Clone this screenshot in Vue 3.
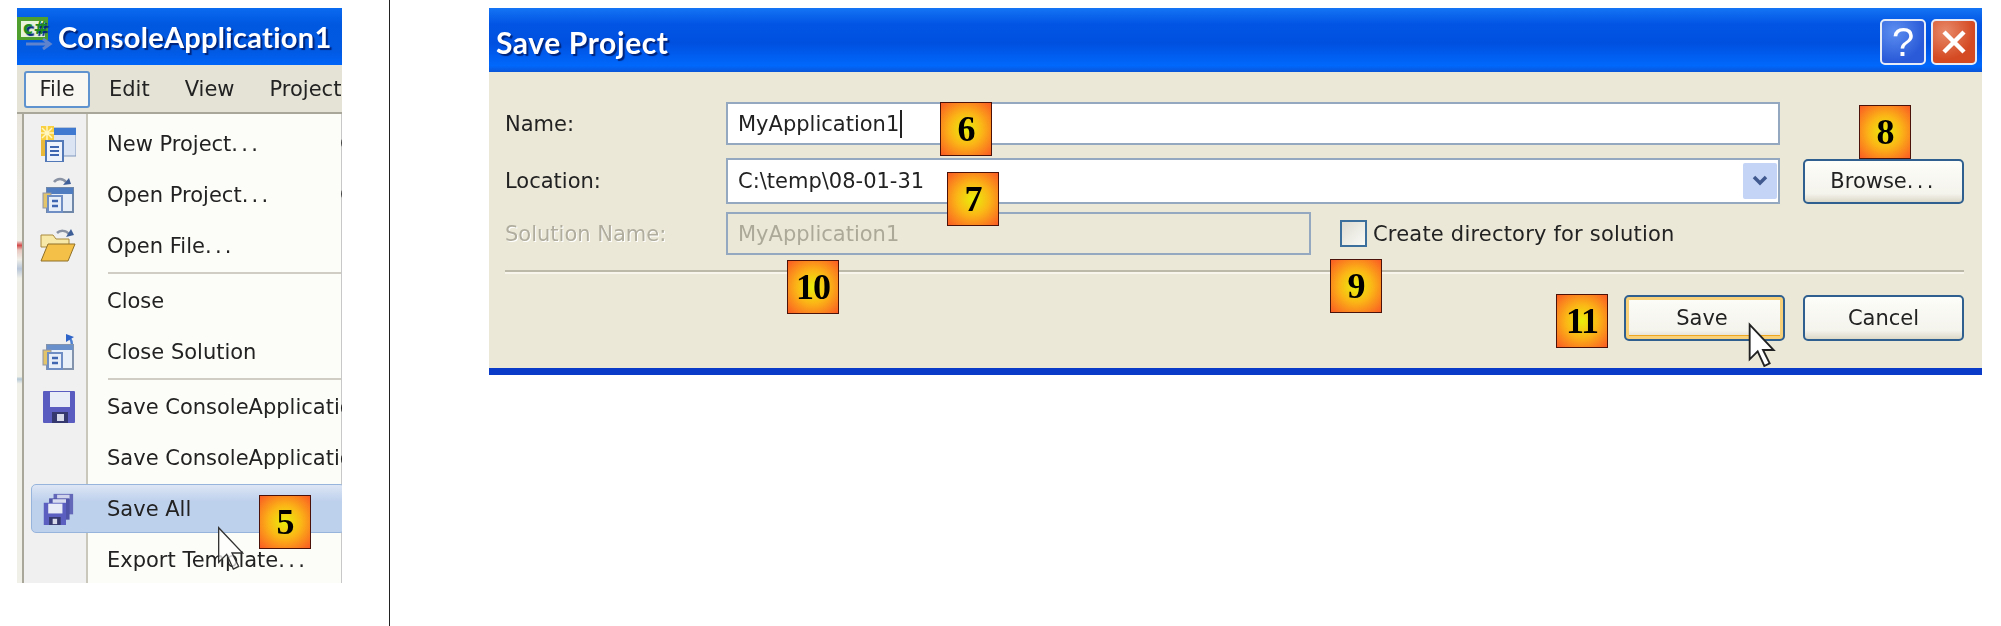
<template>
  <div class="page">
    <section class="ide">
      <header class="ide-title">
        <svg class="cs-icon" width="36" height="34" viewBox="0 0 36 34">
          <rect x="0" y="0" width="31" height="23" fill="#4f9f2e" />
          <rect x="4" y="4" width="24" height="16" fill="#e8f3dc" />
          <text x="6" y="17" class="cs-text">c#</text>
          <path d="M9 27h22M26 22l7 5-7 5" fill="none" stroke="#5f83cc" stroke-width="3" />
        </svg>
        <span>ConsoleApplication1</span>
      </header>
      <nav class="menubar">
        <span class="menu-top active">File</span>
        <span class="menu-top">Edit</span>
        <span class="menu-top">View</span>
        <span class="menu-top">Project</span>
      </nav>
      <div class="menu-wrap">
        <div class="bg-strip"></div>
        <ul class="menu">
          <template v-for="item in menuItems" :key="item.label">
            <li v-if="item.sep" class="sep"></li>
            <li v-else class="item" :class="{ hot: item.hot }">
              <span class="gutter">
                <svg v-if="item.icon" width="36" height="36" viewBox="0 0 36 36" v-html="icons[item.icon]"></svg>
              </span>
              <span class="item-label">{{ item.label }}<span v-if="item.dots" class="dots">...</span></span>
              <span v-if="item.keys" class="keys">{{ item.keys }}</span>
            </li>
          </template>
        </ul>
      </div>
      <span class="badge b5">5</span>
      <svg class="cursor c1" width="32" height="48" viewBox="0 0 12 18">
        <path d="M1 1v13l3-3 2.500 5.500 2-1-2.500-5h4z" fill="#fff" fill-opacity=".75" stroke="#333" stroke-width=".5" />
      </svg>
    </section>

    <div class="rule"></div>

    <section class="dialog">
      <header class="dlg-title">
        <span>Save Project</span>
        <div class="caption-btns">
          <span class="cap help">?</span>
          <span class="cap close">
            <svg width="26" height="26" viewBox="0 0 26 26"><path d="M3 3l20 20M23 3L3 23" stroke="#fff" stroke-width="4.500" /></svg>
          </span>
        </div>
      </header>
      <div class="dlg-body">
        <div class="form">
          <div class="row row-name">
            <label>Name:</label>
            <div class="field grow">MyApplication1<i class="caret"></i></div>
          </div>
          <div class="row row-loc">
            <label>Location:</label>
            <div class="field grow">
              C:\temp\08-01-31
              <span class="drop">
                <svg width="16" height="12" viewBox="0 0 16 12"><path d="M2 2l6 6 6-6" fill="none" stroke="#40598f" stroke-width="3.500" /></svg>
              </span>
            </div>
            <button class="btn browse">Browse<span class="dots">...</span></button>
          </div>
          <div class="row row-sol">
            <label class="off">Solution Name:</label>
            <div class="field disabled">MyApplication1</div>
            <span class="check"></span>
            <span class="check-label">Create directory for solution</span>
          </div>
        </div>
        <div class="divider"></div>
        <div class="actions">
          <button class="btn default">Save</button>
          <button class="btn">Cancel</button>
        </div>
      </div>
      <span class="badge b6">6</span>
      <span class="badge b7">7</span>
      <span class="badge b8">8</span>
      <span class="badge b9">9</span>
      <span class="badge b10">10</span>
      <span class="badge b11">11</span>
      <svg class="cursor c2" width="32" height="48" viewBox="0 0 12 18">
        <path d="M1 1v13l3-3 2.500 5.500 2-1-2.500-5h4z" fill="#fff" stroke="#222" stroke-width=".7" />
      </svg>
    </section>
  </div>
</template>

<script setup>
const menuItems = [
  { label: 'New Project', dots: true, icon: 'newProject', keys: 'Ctrl+Shift+N' },
  { label: 'Open Project', dots: true, icon: 'openProject', keys: 'Ctrl+Shift+O' },
  { label: 'Open File', dots: true, icon: 'openFile' },
  { label: 'sep1', sep: true },
  { label: 'Close' },
  { label: 'Close Solution', icon: 'closeSolution' },
  { label: 'sep2', sep: true },
  { label: 'Save ConsoleApplication1', icon: 'save' },
  { label: 'Save ConsoleApplication1 As', dots: true },
  { label: 'Save All', icon: 'saveAll', hot: true },
  { label: 'Export Template', dots: true }
]

// small document + window used by the project icons
const projectDoc = `<rect x="3" y="16" width="8" height="15" fill="#e2c56a" stroke="#8f96a8"/><rect x="8" y="19" width="14" height="16" fill="#e8eef8" stroke="#6f8fc4" stroke-width="2"/><path d="M12 24h6M12 29h6" stroke="#3f66b0" stroke-width="2.500"/>`

const icons = {
  newProject: `<rect x="12" y="2" width="24" height="28" fill="#dbe4f2" stroke="#7f96bc"/><rect x="12" y="2" width="24" height="7" fill="#3f7ad0"/><rect x="1" y="0" width="13" height="14" fill="#f8d040"/><path d="M7 0v14M1 7h13M2 2l10 10M12 2L2 12" stroke="#fff6c0" stroke-width="1.500"/><rect x="1" y="14" width="6" height="16" fill="#eab838"/><rect x="6" y="15" width="17" height="21" fill="#eef3fb" stroke="#5378b8" stroke-width="2"/><path d="M10 21h9M10 25h9M10 29h9" stroke="#3f66b0" stroke-width="2"/>`,
  openProject: `<path d="M14 5c3-4 9-4 12 0" fill="none" stroke="#8a93a4" stroke-width="2.500"/><path d="M23 8l8-1-2-6z" fill="#3f5f98"/><rect x="7" y="11" width="26" height="24" fill="#e6edf7" stroke="#6f87a8" stroke-width="2"/><rect x="7" y="11" width="26" height="6" fill="#4f7cc0"/>${projectDoc}`,
  openFile: `<path d="M17 5c3-3 9-3 12 1" fill="none" stroke="#8a93a4" stroke-width="2.500"/><path d="M26 9l8-2-3-6z" fill="#3f5f98"/><path d="M1 7h12l3 4h13v8H1z" fill="#f8e8a8" stroke="#a98a3c"/><path d="M1 33l7-17h27l-7 17z" fill="#f4c048" stroke="#8f7028"/>`,
  closeSolution: `<path d="M29 4c2 1 4 5 2 9" fill="none" stroke="#4c7fd0" stroke-width="2.500"/><path d="M26 8l0-8 8 3z" fill="#2e64c8"/><rect x="7" y="11" width="26" height="24" fill="#eaf0f8" stroke="#8193ad" stroke-width="2"/><rect x="7" y="11" width="26" height="5" fill="#6a90cc"/>${projectDoc}`,
  save: `<rect x="3" y="2" width="32" height="32" rx="1" fill="#5a5cc0"/><rect x="10" y="3" width="20" height="15" fill="#e8ecf6"/><rect x="12" y="23" width="16" height="11" fill="#34386e"/><rect x="17" y="25" width="7" height="7" fill="#d6d9ea"/>`,
  saveAll: `<rect x="13" y="1" width="22" height="23" fill="#6468b8"/><rect x="17" y="2" width="14" height="5" fill="#cfd4ec"/><rect x="8" y="6" width="23" height="24" fill="#4f54a8"/><rect x="12" y="7" width="15" height="6" fill="#d8dcf0"/><rect x="2" y="11" width="25" height="25" fill="#5a5fc0"/><rect x="7" y="12" width="16" height="11" fill="#e8ecf6"/><rect x="8" y="27" width="13" height="9" fill="#34386e"/><rect x="12" y="29" width="5" height="6" fill="#d6d9ea"/>`
}
</script>

<style>
body { margin: 0; background: #fff; }
</style>

<style scoped>
.page {
  display: flex;
  align-items: flex-start;
  width: 2001px;
  height: 626px;
  overflow: hidden;
  background: #fff;
  font-family: "DejaVu Sans", sans-serif;
  font-size: 21px;
  color: #222;
}

.ide {
  position: relative;
  flex: none;
  width: 325px;
  height: 576px;
  margin: 8px 0 0 17px;
  overflow: hidden;
  filter: blur(0.5px);
}

.ide-title {
  display: flex;
  align-items: center;
  gap: 5px;
  height: 57px;
  background: linear-gradient(#0a6af0, #0057e0 30%, #0259e2 75%, #0064f8);
  color: #fff;
  font-family: "Lato", sans-serif;
  font-size: 29px;
  font-weight: 700;
  letter-spacing: 0.3px;
  text-shadow: 2px 2px 1px #00257c;
}

.cs-icon { flex: none; align-self: flex-start; margin-top: 9px; }
.cs-text { font: 700 17px "DejaVu Sans", sans-serif; fill: #1e8b1e; }

.menubar {
  display: flex;
  align-items: center;
  height: 46px;
  padding-top: 1px;
  border-bottom: 2px solid #a9a69a;
  background: #e4e3d6;
}

.menu-top { flex: none; padding-right: 35px; white-space: nowrap; }
.menu-top:first-child { margin-left: 7px; }
.menu-top.active {
  box-sizing: border-box;
  width: 66px;
  height: 37px;
  margin-right: 19px;
  padding: 0;
  border: 2px solid #5f93cf;
  border-radius: 3px;
  background: #f8f7f2;
  line-height: 33px;
  text-align: center;
}

.menu-wrap { display: flex; height: 469px; }

.bg-strip {
  flex: none;
  width: 5px;
  background: linear-gradient(#e8e6dc, #f0efe8 27%, #d24a4a 28%, #e8c8c0 29%, #f0efe8 31%, #b8c6d8 33%, #f0efe8 35%, #f0efe8 56%, #b3c7d4 56.500%, #f0efe8 57.500%);
}

.menu {
  flex: 1;
  min-width: 0;
  margin: 0;
  padding: 4px 0 0;
  border-left: 2px solid #a9a69a;
  border-right: 1px solid #c8c8c8;
  background: linear-gradient(90deg, #f0f0f0 62px, #c9c7bc 62px, #c9c7bc 64px, #fcfcf8 64px);
  list-style: none;
}

.item {
  display: flex;
  align-items: center;
  height: 51px;
  white-space: nowrap;
}

.gutter {
  display: flex;
  flex: none;
  justify-content: center;
  width: 60px;
  margin-left: 4px;
  margin-right: 19px;
}

.item-label { flex: none; min-width: 233px; }
.keys { flex: none; }
.dots { letter-spacing: 3.300px; }

.sep {
  height: 2px;
  margin: 1px 0 1px 84px;
  background: #cfcdc4;
}

.hot {
  box-sizing: border-box;
  height: 49px;
  margin: 1px -4px 1px 7px;
  border: 1px solid #97b5dc;
  border-radius: 5px;
  background: linear-gradient(#dde6f5, #bdd0ec 35%);
}

.hot .gutter { margin-left: -4px; }
.hot svg { width: 32px; height: 32px; }

.badge {
  position: absolute;
  display: flex;
  align-items: center;
  justify-content: center;
  box-sizing: border-box;
  width: 52px;
  height: 54px;
  border: 1px solid #4a1208;
  background: radial-gradient(circle, #e8f00a 0%, #fbb616 45%, #fa5a24 100%);
  color: #000;
  font-family: "Liberation Serif", serif;
  font-size: 36px;
  font-weight: 700;
  letter-spacing: -1px;
}

.b5 { left: 242px; top: 487px; }
.cursor { position: absolute; }
.c1 { left: 199px; top: 517px; }

.rule {
  flex: none;
  width: 1px;
  height: 626px;
  margin-left: 47px;
  background: #222;
}

.dialog {
  position: relative;
  flex: none;
  width: 1493px;
  height: 367px;
  margin: 8px 0 0 99px;
  border-bottom: 7px solid #0a3ac8;
  box-sizing: border-box;
  filter: blur(0.5px);
}

.dlg-title {
  display: flex;
  align-items: center;
  justify-content: space-between;
  box-sizing: border-box;
  height: 64px;
  padding: 4px 5px 0 7px;
  background: linear-gradient(#1474f4, #0255e4 25%, #0050e0 55%, #0068fc 90%, #0a55d8);
  color: #fff;
  font-family: "Lato", sans-serif;
  font-size: 30px;
  font-weight: 700;
  letter-spacing: 0.6px;
  text-shadow: 2px 2px 1px #00257c;
}

.caption-btns { display: flex; gap: 5px; }

.cap {
  display: flex;
  align-items: center;
  justify-content: center;
  box-sizing: border-box;
  width: 46px;
  height: 46px;
  border: 2px solid #e6ecf8;
  border-radius: 5px;
  font-family: "Liberation Sans", sans-serif;
  font-size: 40px;
  font-weight: 400;
  letter-spacing: 0;
  text-shadow: none;
}

.help { background: radial-gradient(circle at 30% 25%, #5c8ef0, #2a5ad8 70%); }
.close { background: radial-gradient(circle at 30% 25%, #e88a6a, #d44a22 65%); }

.dlg-body {
  box-sizing: border-box;
  height: 296px;
  padding: 0 18px 0 16px;
  background: #ebe8d8;
}

.form { display: flex; flex-direction: column; padding-top: 30px; }

.row { display: flex; align-items: center; }
.row-name { height: 43px; margin-right: 184px; }
.row-loc { height: 46px; margin-top: 13px; }
.row-sol { height: 43px; margin-top: 8px; }

label { flex: none; width: 221px; }
.off { color: #b0ad9e; text-shadow: 1px 1px 0 #fff; }

.field {
  position: relative;
  display: flex;
  align-items: center;
  box-sizing: border-box;
  height: 100%;
  padding-left: 10px;
  border: 2px solid #94a9c0;
  background: #fff;
}

.grow { flex: 1; }
.row-loc .field { flex: none; width: 1054px; }
.disabled {
  flex: none;
  width: 585px;
  background: #ebe8d8;
  color: #aca999;
}

.caret {
  display: inline-block;
  width: 2px;
  height: 28px;
  margin-left: 1px;
  background: #222;
}

.drop {
  position: absolute;
  top: 3px;
  right: 1px;
  display: flex;
  align-items: center;
  justify-content: center;
  width: 34px;
  height: 36px;
  border-radius: 2px;
  background: #c4d4f6;
}

.check {
  flex: none;
  box-sizing: border-box;
  width: 27px;
  height: 27px;
  margin-left: 29px;
  border: 2px solid #3d6f9c;
  background: linear-gradient(135deg, #dedcd2, #fafaf6);
}

.check-label { margin-left: 6px; letter-spacing: 0.2px; white-space: nowrap; }

.btn {
  flex: none;
  box-sizing: border-box;
  width: 161px;
  height: 45px;
  padding: 0;
  border: 2px solid #2f5f8e;
  border-radius: 5px;
  background: linear-gradient(#fdfdf9, #f4f3ec 80%, #dcd8c8);
  color: #222;
  font: inherit;
}

.browse { margin-left: 23px; }

.divider {
  height: 2px;
  margin-top: 15px;
  border-bottom: 2px solid #f8f6ec;
  background: #bdb9a8;
}

.actions {
  display: flex;
  justify-content: flex-end;
  gap: 18px;
  margin-top: 21px;
}

.actions .btn { height: 46px; }

.default {
  padding-right: 5px;
  box-shadow: inset 0 0 0 3px #f8d078, inset 0 -3px 0 1px #eea520;
}

.b6 { left: 451px; top: 94px; }
.b7 { left: 458px; top: 164px; }
.b8 { left: 1370px; top: 97px; }
.b9 { left: 841px; top: 251px; }
.b10 { left: 298px; top: 252px; }
.b11 { left: 1067px; top: 286px; }
.c2 { left: 1258px; top: 314px; }
</style>
